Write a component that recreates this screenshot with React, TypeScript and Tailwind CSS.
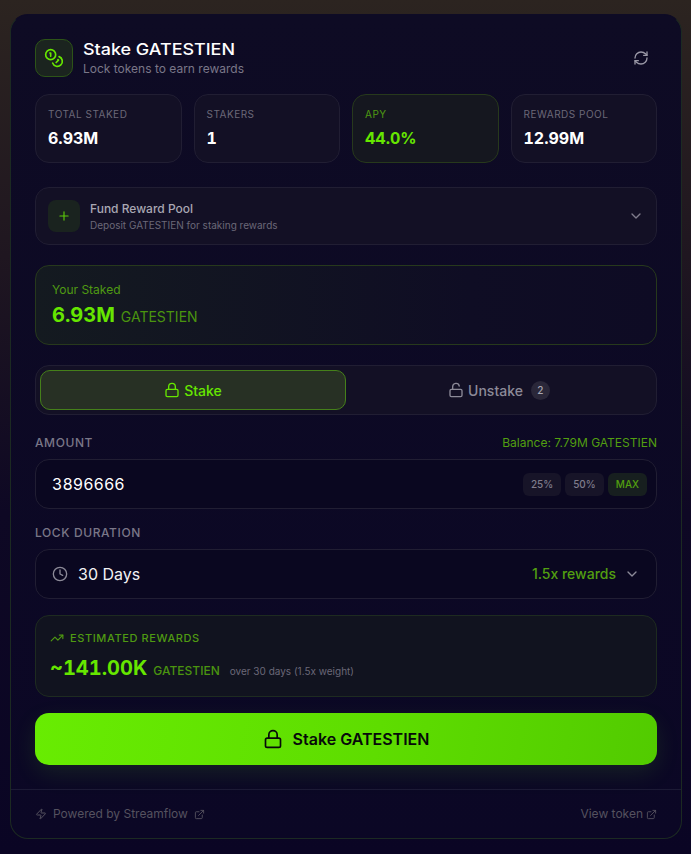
import { Coins, RefreshCw, Plus, ChevronDown, Lock, LockOpen, Clock, TrendingUp, Zap, ExternalLink } from "lucide-react";

function Stat({ label, value, hi }: { label: string; value: string; hi?: boolean }) {
  return (
    <div className={`rounded-[14px] border px-3 pt-[12px] h-[69px] ${hi ? "border-[#27391c] bg-[#15171f]" : "border-[#211e33] bg-[#131025]"}`}>
      <div className={`text-[10px] leading-[15px] tracking-[0.5px] ${hi ? "text-[#4f9a12]" : "text-[#6b6878]"}`}>{label}</div>
      <div className={`mt-[4px] text-[16px] leading-[24px] font-bold tabular-nums ${hi ? "text-[#66e600]" : "text-white"}`}>{value}</div>
    </div>
  );
}

export default function App() {
  return (
    <div className="min-h-[854px] bg-[linear-gradient(180deg,#2c2420_0%,#1f1620_30%,#0e0824_60%,#0a0524_100%)] pt-[14px] pl-[10px] font-['Inter',sans-serif]">
      <div className="w-[672px] h-[825px] rounded-[18px] border border-[#1c2a22] border-t-[#0e0b25] bg-[linear-gradient(180deg,#0e0b24_0%,#0b0725_100%)] flex flex-col overflow-hidden">
        <div className="flex-1 px-6 pt-6">
          <div className="flex items-center justify-between h-[38px]">
            <div className="flex items-center gap-[10px]">
              <div className="w-[38px] h-[38px] rounded-[10px] border border-[#2d5418] bg-[#1b241f] flex items-center justify-center">
                <Coins size={20} strokeWidth={2} className="text-[#66e600]" />
              </div>
              <div>
                <div className="origin-left scale-x-[1.12] text-[16px] leading-[20px] font-medium text-white">Stake GATESTIEN</div>
                <div className="text-[12px] leading-[16px] mt-[2px] text-[#7a7788]">Lock tokens to earn rewards</div>
              </div>
            </div>
            <RefreshCw size={16} className="mr-2 text-[#9a98a6]" />
          </div>

          <div className="mt-[17px] grid grid-cols-4 gap-3">
            <Stat label="TOTAL STAKED" value="6.93M" />
            <Stat label="STAKERS" value="1" />
            <Stat label="APY" value="44.0%" hi />
            <Stat label="REWARDS POOL" value="12.99M" />
          </div>

          <div className="mt-6 h-[58px] rounded-[14px] border border-[#211e33] bg-[#131025] flex items-center justify-between pl-3 pr-3">
            <div className="flex items-center gap-[10px]">
              <div className="w-8 h-8 rounded-[8px] bg-[#1a231f] flex items-center justify-center">
                <Plus size={14} className="text-[#5cc90a]" />
              </div>
              <div>
                <div className="text-[12px] leading-[16px] font-medium text-[#a9a7b3]">Fund Reward Pool</div>
                <div className="text-[10px] leading-[14px] mt-[1px] text-[#6b6878]">Deposit GATESTIEN for staking rewards</div>
              </div>
            </div>
            <ChevronDown size={16} className="text-[#7f7c8c]" />
          </div>

          <div className="mt-5 h-[80px] rounded-[14px] border border-[#27391c] bg-[linear-gradient(90deg,#141a20_0%,#0f0d24_70%,#0e0b24_100%)] px-4 pt-[16px]">
            <div className="text-[12px] leading-[16px] text-[#4f9a12]">Your Staked</div>
            <div className="flex items-baseline gap-[6px] mt-[2px]">
              <span className="text-[20px] leading-[30px] font-bold tabular-nums text-[#66e600]">6.93M</span>
              <span className="text-[14px] text-[#4a940f]">GATESTIEN</span>
            </div>
          </div>

          <div className="mt-5 h-[50px] rounded-[14px] border border-[#211e33] bg-[#131025] p-1 grid grid-cols-2">
            <div className="rounded-[10px] border border-[#45801a] bg-[#273024] flex items-center justify-center gap-1 text-[#66e600]">
              <Lock size={16} />
              <span className="text-[14px] font-medium">Stake</span>
            </div>
            <div className="flex items-center justify-center gap-1 text-[#8c8a98]">
              <LockOpen size={16} />
              <span className="text-[14px] font-medium">Unstake</span>
              <span className="ml-[4px] w-[19px] h-[19px] rounded-full bg-[#2a2739] text-[10px] font-medium text-[#a9a7b3] flex items-center justify-center">2</span>
            </div>
          </div>

          <div className="mt-5 flex items-center justify-between h-[16px]">
            <span className="text-[12px] font-medium tracking-[0.6px] text-[#7a7788]">AMOUNT</span>
            <span className="text-[12px] text-[#529f10]">Balance: 7.79M GATESTIEN</span>
          </div>
          <div className="mt-[8px] h-[50px] rounded-[14px] border border-[#211e33] bg-[#0a0720] flex items-center justify-between pl-4 pr-[9px]">
            <span className="text-[16px] tabular-nums text-white">3896666</span>
            <div className="flex gap-1">
              <span className="h-[23px] px-2 rounded-[6px] bg-[#171428] text-[10px] leading-[23px] font-medium text-[#7f7c8c]">25%</span>
              <span className="h-[23px] px-2 rounded-[6px] bg-[#171428] text-[10px] leading-[23px] font-medium text-[#7f7c8c]">50%</span>
              <span className="h-[23px] px-2 rounded-[6px] bg-[#171f1f] text-[10px] leading-[23px] font-medium text-[#529f10]">MAX</span>
            </div>
          </div>

          <div className="mt-[16px] h-[16px] flex items-center">
            <span className="text-[12px] font-medium tracking-[0.6px] text-[#7a7788]">LOCK DURATION</span>
          </div>
          <div className="mt-[8px] h-[50px] rounded-[14px] border border-[#211e33] bg-[#0a0720] flex items-center justify-between px-4">
            <div className="flex items-center gap-[10px]">
              <Clock size={16} className="text-[#8c8a98]" />
              <span className="text-[16px] text-[#f2f2f4]">30 Days</span>
            </div>
            <div className="flex items-center gap-2">
              <span className="mb-[2px] text-[14px] font-medium text-[#529f10]">1.5x rewards</span>
              <ChevronDown size={16} className="text-[#8c8a98]" />
            </div>
          </div>

          <div className="mt-4 h-[82px] rounded-[14px] border border-[#1e2b20] bg-[#11131f] pl-[14px] pt-[14px]">
            <div className="flex items-center gap-[6px] text-[#4f9a12]">
              <TrendingUp size={14} />
              <span className="text-[11px] font-medium tracking-[0.6px]">ESTIMATED REWARDS</span>
            </div>
            <div className="flex items-baseline mt-[6px]">
              <span className="text-[20px] leading-[30px] font-bold tabular-nums text-[#66e600]">~141.00K</span>
              <span className="ml-[6px] text-[12px] font-medium text-[#4a940f]">GATESTIEN</span>
              <span className="ml-[10px] text-[10px] text-[#6b6878]">over 30 days (1.5x weight)</span>
            </div>
          </div>

          <div className="mt-4 h-[52px] rounded-[14px] bg-[linear-gradient(100deg,#68ec02_0%,#5edd00_55%,#52cb00_100%)] shadow-[0_8px_24px_rgba(120,255,40,0.1)] flex items-center justify-center gap-[10px] text-[#07090a]">
            <Lock size={20} />
            <span className="text-[16px] font-semibold">Stake GATESTIEN</span>
          </div>
        </div>

        <div className="h-[49px] border-t border-[#1c1a35] px-6 flex items-center justify-between text-[12px] text-[#55525f]">
          <div className="flex items-center gap-[6px]">
            <Zap size={12} />
            <span>Powered by Streamflow</span>
            <ExternalLink size={11} />
          </div>
          <div className="flex items-center gap-[3px]">
            <span>View token</span>
            <ExternalLink size={11} />
          </div>
        </div>
      </div>
    </div>
  );
}
